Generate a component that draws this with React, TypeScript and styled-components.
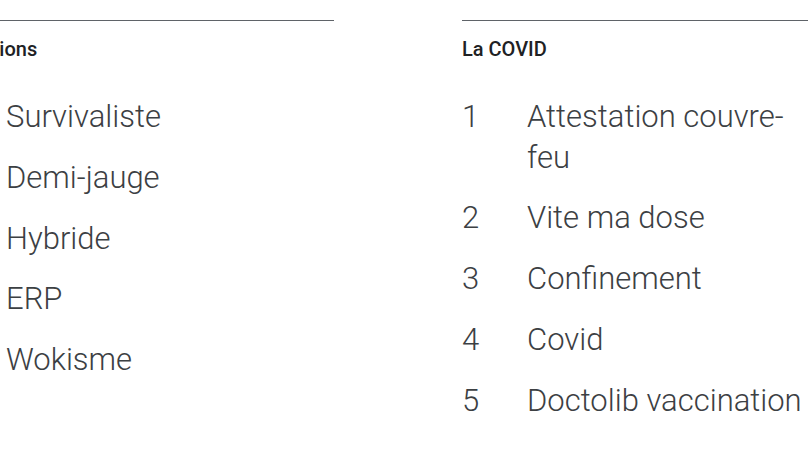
import React from 'react'
import styled, { createGlobalStyle } from 'styled-components'

const Global = createGlobalStyle`
  html, body {
    margin: 0;
    padding: 0;
    background: #fff;
    overflow: hidden;
  }
  body {
    font-family: Roboto, "Noto Sans", Arial, sans-serif;
  }
`

type Trend = { title: string; items: string[] }

const trends: Trend[] = [
  {
    title: 'Définitions',
    items: ['Survivaliste', 'Demi-jauge', 'Hybride', 'ERP', 'Wokisme'],
  },
  {
    title: 'La COVID',
    items: ['Attestation couvre-feu', 'Vite ma dose', 'Confinement', 'Covid', 'Doctolib vaccination'],
  },
]

const App = () => {
  return (
    <>
      <Global />
      <Wrapper>
        {trends.map((t) => (
          <Column key={t.title}>
            <Heading>{t.title}</Heading>
            <List>
              {t.items.map((item, i) => (
                <Row key={item}>
                  <Rank>{i + 1}</Rank>
                  <Label>{item}</Label>
                </Row>
              ))}
            </List>
          </Column>
        ))}
      </Wrapper>
    </>
  )
}

export default App

const Wrapper = styled.div`
  display: flex;
  gap: 128px;
  margin-left: -59px;
  padding-top: 20px;
  width: max-content;
`

const Column = styled.section`
  width: 393px;
  border-top: 1px solid #5f6368;
  display: flex;
  flex-direction: column;
`

const Heading = styled.h3`
  margin: 16px 0 0;
  font-size: 20px;
  line-height: 24px;
  font-weight: 500;
  color: #202124;
`

const List = styled.ol`
  list-style: none;
  margin: 36px 0 0;
  padding: 0;
  display: flex;
  flex-direction: column;
  gap: 20.25px;
`

const Row = styled.li`
  display: flex;
  padding-right: 40px;
  font-size: 31px;
  line-height: 40.5px;
  font-weight: 300;
  color: #3c4043;
`

const Rank = styled.span`
  flex: 0 0 65px;
`

const Label = styled.span`
  flex: 1;
`
